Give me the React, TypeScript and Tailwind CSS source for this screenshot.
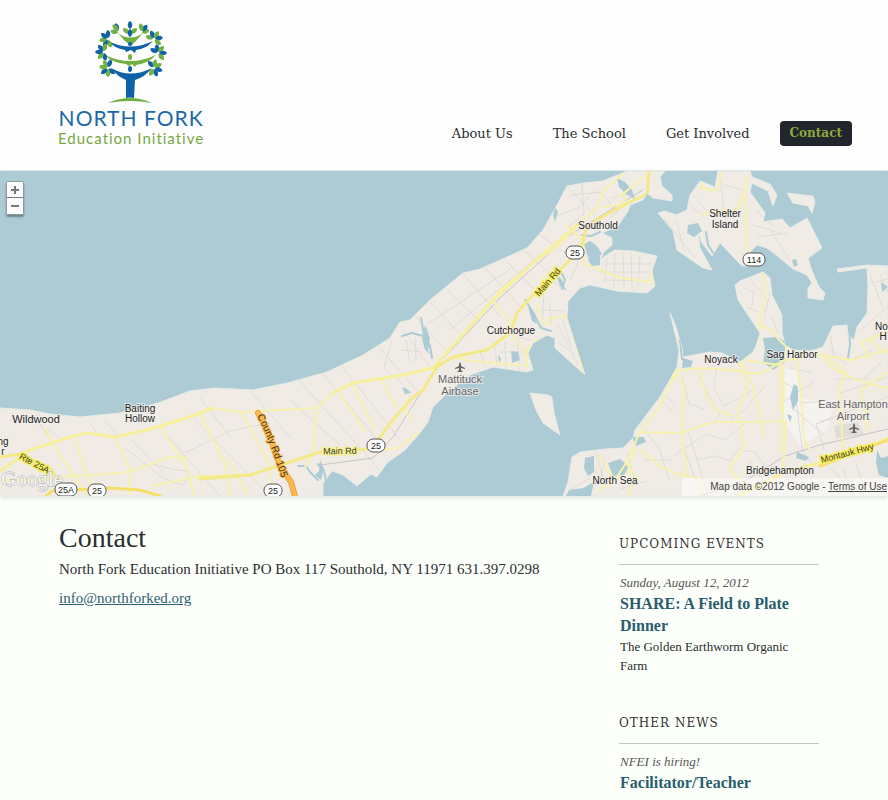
import React from 'react';

const navItems = [
  { label: 'About Us', active: false },
  { label: 'The School', active: false },
  { label: 'Get Involved', active: false },
  { label: 'Contact', active: true },
];

const blue = '#0f62a8';
const green = '#71b043';

/* Each cluster fans its leaves out around the end of a branch. */
const leafClusters = [
  { x: 109, y: 39, start: 160, colors: [green, blue, green, blue, blue] },
  { x: 155, y: 39, start: -70, colors: [green, blue, green, blue, green] },
  { x: 105, y: 52, start: 170, colors: [blue, green, blue, blue, green] },
  { x: 159, y: 53, start: -60, colors: [blue, blue, green, blue, green] },
  { x: 109, y: 68, start: 130, colors: [blue, green, blue, green, green, blue] },
  { x: 155, y: 68, start: -40, colors: [blue, green, green, blue, blue, green] },
];

const leafPath = 'M0 -1 C-3 -3 -3 -7 0 -9 C3 -7 3 -3 0 -1Z';

function TreeLogo() {
  return (
    <svg viewBox="94 18 76 88" className="h-[88px] w-[76px]" aria-hidden="true">
      <path d="M109 103 Q131 93 153 103 Q131 99 109 103Z" fill={green} />
      <path
        d="M112 68 Q131 79 153 68 Q146 77 136 80 L135 98 Q131 97 127 98 L127 80 Q119 77 112 68Z"
        fill={blue}
      />
      <path
        d="M106 55 Q131 67 157 55 Q150 63 137 65 L136 67 L133 64 L130 66 L127 64 Q113 63 106 55Z"
        fill={green}
      />
      <path
        d="M109 41 Q131 52 154 41 Q147 49 137 50 L136 53 L132 50 L127 52 L126 50 Q115 48 109 41Z"
        fill={blue}
      />
      <path d="M119 33 Q131 42 144 33 Q138 40 132 46 Q124 40 119 33Z" fill={green} />
      <ellipse cx="131" cy="69" rx="2" ry="3" fill={blue} />
      <ellipse cx="131" cy="57" rx="2" ry="3" fill={green} />
      <ellipse cx="131" cy="44" rx="2" ry="2" fill={blue} />
      {leafClusters.map((c) =>
        c.colors.map((color, i) => (
          <path
            key={`${c.x}-${c.y}-${i}`}
            d={leafPath}
            fill={color}
            transform={`translate(${c.x} ${c.y}) rotate(${c.start + i * 50})`}
          />
        )),
      )}
      <path d={leafPath} fill={blue} transform="translate(131 30)" />
      <path d={leafPath} fill={green} transform="translate(131 34) rotate(-52)" />
      <path d={leafPath} fill={green} transform="translate(131 34) rotate(52)" />
      <path d={leafPath} fill={blue} transform="translate(131 38)" />
      <path d={leafPath} fill={green} transform="translate(120 33) rotate(-75)" />
      <path d={leafPath} fill={blue} transform="translate(119 32) rotate(-15)" />
      <path d={leafPath} fill={green} transform="translate(120 31) rotate(-45)" />
      <path d={leafPath} fill={green} transform="translate(142 33) rotate(70)" />
      <path d={leafPath} fill={blue} transform="translate(143 32) rotate(35)" />
      <path d={leafPath} fill={green} transform="translate(143 32) rotate(-10)" />
    </svg>
  );
}

const land = [
  // North Fork
  'M0 408 L30 410 L50 414 L80 417 L120 413 L158 403 L190 391 L215 388 L253 390 L287 383 L327 372 L363 355 L390 338 L400 322 L410 320 L430 300 L463 273 L480 269 L507 257 L527 248 L543 230 L557 205 L567 186 L583 183 L603 181 L627 171 L665 171 L660 177 L662 186 L672 195 L672 201 L653 198 L647 193 L643 200 L630 205 L628 211 L618 226 L602 233 L612 238 L612 245 L604 252 L600 260 L608 254 L615 250 L633 251 L657 256 L652 271 L655 286 L647 293 L617 291 L590 285 L580 288 L568 301 L567 318 L585 375 L555 348 L555 338 L547 335 L533 343 L528 353 L533 370 L527 372 L493 367 L470 375 L450 390 L433 407 L428 422 L420 433 L405 450 L387 463 L377 477 L371 474 L357 486 L343 475 L332 471 L323 483 L323 496 L0 496Z',
  // Shelter Island
  'M658 213 L665 211 L676 215 L687 210 L690 195 L700 181 L715 187 L718 171 L750 171 L752 177 L770 184 L777 195 L773 206 L768 191 L752 183 L750 192 L765 213 L763 222 L782 219 L790 228 L807 218 L822 248 L808 258 L812 271 L819 287 L825 293 L823 300 L808 298 L808 288 L812 283 L807 275 L793 269 L780 258 L767 248 L757 245 L750 252 L754 266 L742 266 L720 243 L712 256 L702 243 L698 232 L700 248 L712 270 L703 268 L677 250 L673 231Z',
  'M787 193 L802 195 L813 196 L815 202 L812 213 L808 206 L793 203Z',
  // Robins Island
  'M530 393 L548 395 L552 397 L554 413 L560 435 L543 423 L536 410Z',
  // South Fork
  'M735 285 L740 281 L763 272 L770 278 L772 295 L782 315 L782 332 L785 345 L793 350 L810 351 L823 347 L833 326 L847 325 L848 335 L854 340 L857 327 L867 313 L868 285 L867 268 L838 272 L837 269 L867 265 L888 266 L888 496 L563 496 L568 482 L572 457 L580 452 L605 449 L623 448 L633 438 L635 430 L660 397 L677 367 L679 350 L670 313 L675 324 L682 347 L683 357 L710 352 L722 353 L740 362 L753 352 L757 343 L760 333 L738 300Z',
];

const ponds = [
  'M688 225 L698 223 L702 231 L694 237 L687 233Z',
  'M584 244 l6 -3 7 5 5 8 -6 5 -8 -2z',
  'M556 274 l4 12 6 5 -4 -11z',
  'M591 250 l9 5 0 10 -8 1 -4 -6z',
  'M555 207 l3 5 -3 10 -2 -7z',
  'M617 178 l8 4 7 8 3 9 -9 -5 -7 -7z',
  'M511 351 l7 1 2 8 -8 3z',
  'M498 354 l3 5 -2 4z',
  'M528 306 l4 3 5 15 -5 -3z',
  'M402 387 l5 2 4 4 -6 1z',
  'M425 325 l5 13 -2 13 6 6 -9 -7 -3 -12z',
  'M585 458 l9 -2 0 16 -6 4 -4 -8z',
  'M608 463 l12 -4 9 7 -5 9 -11 1z',
  'M632 437 l12 0 2 5 -10 4z',
  'M763 338 l14 -1 8 5 0 20 -12 8 -10 -8 2 -12z',
  'M794 384 l4 3 0 14 -5 9 -3 -13z',
  'M787 414 l5 2 -2 6z',
  'M797 452 l12 5 -3 4 -10 -3z',
  'M877 450 l4 8 7 -2 0 22 -9 -3 -3 -12z',
  'M792 260 l4 -1 2 6 -4 2z',
  'M881 282 l7 5 -6 5z',
  'M320 460 l4 9 -3 11 -6 -5 4 -4z',
  'M683 358 l10 3 -2 6 -9 1z',
  'M569 490 l15 -2 10 -6 -3 14 -25 0z',
];

const creeks = [
  'M421 318 L424 335 L430 346 L432 358',
  'M706 232 L708 245 L714 254',
  'M318 480 L310 472 L306 466 L298 466',
  'M326 481 L324 471 L318 464',
  'M525 300 L533 312 L541 328 L551 331',
  'M560 270 L565 280 L562 289',
  'M849 325 L850 345 L848 358',
  'M600 232 L591 236 L582 235',
  'M680 340 L682 359 L688 363',
  'M574 496 L590 485 L599 482',
  'M402 336 L412 333 L423 336',
];

const streets = [
  'M35 417 L53 444 M90 423 L100 437 M105 420 L120 438 M125 448 L163 478 L183 485 L190 472 L178 470 L150 464',
  'M130 438 L164 473 M165 433 L220 496 M180 455 L230 431 L270 423 M195 420 L270 496 M200 398 L230 436 M250 391 L290 437 M297 378 L380 470',
  'M323 374 L378 440 M290 400 L340 445 M340 364 L400 440 M378 346 L421 395 M392 340 L384 368 L402 384 M403 330 L432 370',
  'M415 316 L447 352 M430 302 L460 334 M446 288 L478 320 M463 274 L500 316 M485 268 L520 306 M505 260 L533 288 M524 250 L550 274',
  'M428 324 L510 269 M450 330 L540 255 M402 350 L422 352 M406 340 L410 362 M415 338 L416 360 M540 235 L568 255',
  'M480 352 L486 367 M495 347 L497 366 M505 341 L506 368 M517 340 L520 370 M524 352 L500 352 M530 340 L518 337',
  'M567 187 L595 215 M582 184 L584 214 L569 226 M595 190 L580 207 L555 217 M604 196 L617 212 M570 195 L603 192 M611 198 L628 194 M586 230 L605 222 L619 210',
  'M607 258 L605 282 M615 254 L614 287 M623 253 L624 288 M631 253 L632 289 M640 256 L638 289 M602 264 L652 264 M600 272 L651 272 M602 280 L650 281',
  'M540 310 L565 311 M544 292 L542 327 M550 303 L551 325 M557 323 L578 365 M563 319 L571 347 M558 342 L575 355 M584 250 L570 280 M550 281 L566 289',
  'M665 220 L695 258 M676 219 L684 250 M690 205 L704 216 M693 195 L717 222 M724 185 L742 190 M720 176 L724 210 M726 214 L739 209 M757 211 L773 226 M753 225 L781 233 M758 237 L788 233 M770 230 L790 260',
  'M743 288 L754 292 L752 306 M750 279 L767 300 M747 307 L759 312 M770 293 L764 318 M772 317 L778 333 M682 375 L689 404 L704 409 M665 395 L675 404 L671 411 L662 400Z',
  'M698 375 L716 410 M716 370 L714 388 L724 406 L755 389 M742 375 L753 385 M765 386 L743 411 L730 419 M675 455 L706 434 L725 440 L744 424 M683 445 L696 481 M696 460 L715 456 L730 461 L739 448 M740 450 L755 452 L770 473',
  'M641 425 L660 450 L669 480 M645 460 L672 460 M688 430 L708 496 M720 413 L715 422 M748 460 L770 490 M783 382 L797 390 M785 401 L803 389 L815 381 M800 403 L827 401 M790 368 L812 373 M836 379 L870 379 M840 393 L888 377 M846 365 L831 349',
  'M820 422 L888 397 M865 377 L882 362 M861 330 L888 306 M868 343 L888 322 M872 350 L855 358 M830 335 L834 357 M870 275 L883 308 M880 274 L888 292 M870 283 L888 279',
  'M585 457 L603 481 M596 452 L603 477 M590 478 L570 490 M605 460 L600 481 M627 454 L636 484 M620 489 L646 481 M30 418 L58 436 M10 420 L40 415',
  'M795 390 L802 449 L815 469 M790 406 L824 435 M824 449 L816 424 L833 418 M828 466 L845 483 M843 468 L850 492 M856 463 L864 487',
];

const roads = [
  'M0 471 L30 450 L67 438 L87 433 L115 437 L147 430 L187 418 L213 408 L240 412 L317 408 L333 393 L353 383 L403 375 L433 368 L467 330 L493 300 L500 290 L533 263 L557 247 L580 223 L597 208 L603 191 L623 173',
  'M45 428 L53 445 L88 496 M74 437 L93 493 M115 437 L130 470 L129 494 M160 426 L187 468 L194 496 M200 413 L225 464 L231 496 M241 412 L268 461 L274 496',
  'M0 480 L38 480 L60 477 L121 473 L138 469 L170 457 L188 458 M154 486 L203 475 M228 459 L248 494 M317 410 L313 440 L314 452 M340 394 L365 432 M352 384 L374 428 M380 378 L397 407',
  'M373 451 L397 448 L419 433 M404 408 L413 421 M315 451 L305 467',
  'M455 357 L470 361 L527 366 L527 353 L511 333 M525 353 L538 338 M530 300 L541 286 L544 277',
  'M495 303 L509 321 L511 333 M537 305 L543 323 L549 323 L548 319 L565 316 L569 320 L584 373 M583 242 L584 264 L602 270 L616 277 L652 282 L652 271 M567 225 L585 243 M553 280 L560 274',
  'M603 207 L619 205 L627 198 M619 197 L644 177',
  'M703 183 L700 188 L711 190 L718 190 M721 171 L719 186 M746 175 L745 190 L736 210 L710 211 L702 216 M744 188 L748 257',
  'M763 273 L765 285 L764 304 L759 324 L772 331 L779 340 L790 350 M759 324 L758 340 L750 354 L740 360 L751 380 L759 411 L764 437',
  'M672 379 L674 371 L699 368 L730 370 L759 374 L785 360 L820 355 L851 360 L888 350 M699 368 L706 395 L716 410 L733 416 M674 371 L684 385 L682 434 L687 477',
  'M677 370 L659 408 L640 432 L626 463 L615 480 L599 490 M640 432 L680 433 L713 422 L756 422 L786 421 L783 469 M745 360 L780 365 L781 410',
  'M738 362 L747 387 L738 411 L744 447 L729 469 L745 485 L768 491 M781 362 L784 386 L781 451 M795 356 L801 389 L804 439 L809 449',
  'M826 356 L846 373 L839 389 L841 418 L844 458 M820 353 L832 368 L855 379 L888 389 M868 360 L862 342 L888 331 M885 353 L870 340 M888 372 L861 390 L868 430',
  'M640 450 L660 466 L675 473 L699 479 L701 495 M635 450 L628 471 L631 495 M600 455 L614 482 M625 462 L640 481',
];

type Place = { lines: string[]; x: number; y: number; lh?: number; size?: number; color?: string };

const places: Place[] = [
  { lines: ['Wildwood'], x: 36, y: 423, size: 11 },
  { lines: ['Baiting', 'Hollow'], x: 140, y: 412 },
  { lines: ['Southold'], x: 598, y: 229 },
  { lines: ['Shelter', 'Island'], x: 725, y: 217, lh: 11 },
  { lines: ['Cutchogue'], x: 511, y: 334 },
  { lines: ['Mattituck', 'Airbase'], x: 460, y: 383, lh: 12, size: 11, color: '#666666' },
  { lines: ['Noyack'], x: 721, y: 363 },
  { lines: ['Sag Harbor'], x: 792, y: 358 },
  { lines: ['East Hampton', 'Airport'], x: 853, y: 408, lh: 12, size: 11, color: '#666666' },
  { lines: ['Bridgehampton'], x: 780, y: 474 },
  { lines: ['North Sea'], x: 615, y: 484 },
  { lines: ['Nor', 'H'], x: 883, y: 330, lh: 10 },
  { lines: ['ng', 'r'], x: 3, y: 445 },
];

const shields = [
  { label: '25', x: 575, y: 252 },
  { label: '25', x: 376, y: 445 },
  { label: '25', x: 273, y: 490 },
  { label: '25', x: 97, y: 490 },
  { label: '25A', x: 66, y: 489 },
  { label: '114', x: 754, y: 259 },
];

const roadNames = [
  { label: 'Main Rd', x: 550, y: 284, angle: -49, halo: '#f4ec62' },
  { label: 'Main Rd', x: 340, y: 454, angle: -1, halo: '#f5f09a' },
  { label: 'Rte 25A', x: 33, y: 466, angle: 28, halo: '#f4ec62' },
  { label: 'Montauk Hwy', x: 848, y: 456, angle: -15, halo: '#f4ec62' },
];

function Plane({ x, y }: { x: number; y: number }) {
  return (
    <path
      transform={`translate(${x} ${y})`}
      d="M0 -5 L1 -3 L1 -1 L5 1 L5 2 L1 1 L1 3 L3 5 L-3 5 L-1 3 L-1 1 L-5 2 L-5 1 L-1 -1 L-1 -3Z"
      fill="#666666"
    />
  );
}

function AreaMap() {
  return (
    <svg
      viewBox="0 171 888 325"
      preserveAspectRatio="xMidYMid slice"
      className="block h-full w-full font-['Liberation_Sans',Arial,sans-serif]"
      role="img"
      aria-label="Map of the North Fork of Long Island"
    >
      <defs>
        <clipPath id="shore">
          {land.map((d) => (
            <path key={d} d={d} />
          ))}
        </clipPath>
      </defs>
      <rect y="171" width="888" height="325" fill="#accbd5" />
      <g fill="#f0ece5" stroke="#e6ebe5" strokeLinejoin="round">
        {land.map((d) => (
          <path key={d} d={d} />
        ))}
      </g>
      <path d="M785 369 L797 368 L800 398 L832 402 L828 430 L800 446 L784 420Z" fill="#f5f3f0" />
      <path d="M834 426 L858 422 L864 435 L836 438Z" fill="#e0dcd7" />
      <g clipPath="url(#shore)" fill="none" strokeLinejoin="round" strokeLinecap="round">
        <g stroke="#dfdbd7">
          {streets.map((d) => (
            <path key={d} d={d} />
          ))}
        </g>
        <g fill="#accbd5">
          {ponds.map((d) => (
            <path key={d} d={d} />
          ))}
        </g>
        <g stroke="#accbd5" strokeWidth="2">
          {creeks.map((d) => (
            <path key={d} d={d} />
          ))}
        </g>
        <path
          d="M320 465 L373 458 L393 437 L440 362 L500 298 L567 237 L620 204 L643 190 M700 496 L745 481 L785 456 L820 445 L888 429"
          stroke="#c9c2c9"
          strokeWidth="1"
        />
        <g stroke="#f6f1ae" strokeWidth="2">
          {roads.map((d) => (
            <path key={d} d={d} />
          ))}
        </g>
        <path
          d="M0 471 L30 450 L67 438 L87 433 L115 437 L147 430 L187 418 L213 408 M333 393 L353 383 L403 375 L433 368 L467 330 L493 300 L533 263 L580 223 M738 496 L790 470 L820 463 L868 447 L888 438 M200 477 L250 475"
          stroke="#f6f09c"
          strokeWidth="3"
        />
        <path
          d="M200 479 L250 475 L290 462 L320 452 L370 449 L380 437 L393 420 L410 400 L423 390 L437 367 L453 357 L487 350 L510 333 L517 313 L528 300 L560 270 L570 260 L583 243 L586 228 L600 218 L628 203 L647 194 L649 171 M0 457 L20 454 L50 468 L58 480"
          stroke="#f4e987"
          strokeWidth="3"
        />
        <path
          d="M44 498 L52 491 L110 488 L140 490 L160 496 M820 466 L888 440"
          stroke="#f5df6c"
          strokeWidth="3"
        />
        <path d="M258 413 L268 432 L280 466 L291 482 L295 496" stroke="#e9a242" strokeWidth="6" />
        <path d="M258 413 L268 432 L280 466 L291 482 L295 496" stroke="#fbb94d" strokeWidth="4" />
      </g>
      <path id="county-road" d="M257 416 C267 434 272 450 281 476" fill="none" />
      <text
        fontSize="10"
        fill="#3c2c10"
        stroke="#fbb94d"
        strokeWidth="2"
        paintOrder="stroke"
      >
        <textPath href="#county-road">County Rd 105</textPath>
      </text>
      {roadNames.map((r) => (
        <text
          key={`${r.label}-${r.x}`}
          transform={`translate(${r.x} ${r.y}) rotate(${r.angle})`}
          textAnchor="middle"
          fontSize="9"
          fill="#44401a"
          stroke={r.halo}
          strokeWidth="3"
          paintOrder="stroke"
        >
          {r.label}
        </text>
      ))}
      <text
        x="1"
        y="486"
        fontSize="21"
        fill="#f6f6f4"
        stroke="#a9aaaa"
        strokeWidth="1"
        paintOrder="stroke"
        className="font-['Liberation_Serif',serif]"
      >
        Google
      </text>
      {shields.map((s) => {
        const half = s.label.length > 2 ? 11 : 9;
        return (
          <g key={`${s.x}-${s.y}`}>
            <rect
              x={s.x - half}
              y={s.y - 6}
              width={half * 2}
              height="13"
              rx="6"
              fill="#ffffff"
              stroke="#555555"
            />
            <text x={s.x} y={s.y + 4} textAnchor="middle" fontSize="9" fill="#222222">
              {s.label}
            </text>
          </g>
        );
      })}
      <Plane x={460} y={367} />
      <Plane x={854} y={428} />
      {places.map((p) =>
        p.lines.map((line, i) => (
          <text
            key={`${line}-${p.x}`}
            x={p.x}
            y={p.y + i * (p.lh ?? 10)}
            textAnchor="middle"
            fontSize={p.size ?? 10}
            fill={p.color ?? '#222222'}
            stroke="#f5f2ee"
            strokeWidth="2"
            strokeOpacity="0.700"
            paintOrder="stroke"
          >
            {line}
          </text>
        )),
      )}
    </svg>
  );
}

function ZoomButton({ label, symbol }: { label: string; symbol: string }) {
  return (
    <button
      type="button"
      aria-label={label}
      className="flex h-4 w-4 items-center justify-center bg-white text-[#777]"
    >
      <svg viewBox="0 0 8 8" className="h-2 w-2" aria-hidden="true">
        <path d={symbol} stroke="currentColor" strokeWidth="2" />
      </svg>
    </button>
  );
}

function SideSection({ title, children }: { title: string; children: React.ReactNode }) {
  return (
    <section>
      <h2 className="border-b border-[#c3c6c1] pb-3 font-['DejaVu_Serif',serif] text-[12px] leading-4 tracking-[1px] text-[#333] uppercase">
        {title}
      </h2>
      <div className="pt-2 pl-px">{children}</div>
    </section>
  );
}

export default function App() {
  return (
    <div className="min-h-screen bg-[#fdfffb] font-['Liberation_Serif',Georgia,serif] text-[#2a2e30]">
      <header className="flex items-end justify-between border-b border-[#e4ebeb] bg-[#fefefe] pt-[18px] pr-9 pb-6 pl-[58px]">
        <a href="#home" className="flex flex-col items-center font-['Lato',sans-serif]">
          <TreeLogo />
          <span className="text-[21px] leading-6 tracking-[1px] whitespace-nowrap text-[#1a68a8]">
            NORTH FORK
          </span>
          <span className="text-[15px] leading-4 tracking-[1px] whitespace-nowrap text-[#76a83e]">
            Education Initiative
          </span>
        </a>
        <nav className="flex gap-5 font-['DejaVu_Serif',serif] text-[13px] leading-[25px]">
          {navItems.map((item) => (
            <a
              key={item.label}
              href={'#' + item.label.toLowerCase().replace(' ', '-')}
              className={
                item.active
                  ? 'rounded bg-[#20262c] px-[10px] text-[12px] font-bold whitespace-nowrap text-[#8fa83f]'
                  : 'px-[10px] whitespace-nowrap'
              }
            >
              {item.label}
            </a>
          ))}
        </nav>
      </header>

      <div className="relative h-[325px] overflow-hidden shadow-[0_2px_5px_rgba(0,0,0,0.12)]">
        <AreaMap />
        <div className="absolute top-[10px] left-[6px] flex flex-col divide-y divide-[#777] rounded-xs border border-[#8a9a9f] shadow-[0_2px_2px_rgba(0,0,0,0.35)]">
          <ZoomButton label="Zoom in" symbol="M0 4H8M4 0V8" />
          <ZoomButton label="Zoom out" symbol="M0 4H8" />
        </div>
        <p className="absolute right-0 bottom-0 bg-white/50 py-px pr-px pl-7 font-['Liberation_Sans',Arial,sans-serif] text-[10px] leading-4 text-[#444]">
          Map data ©2012 Google -{' '}
          <a href="#terms" className="underline">
            Terms of Use
          </a>
        </p>
      </div>

      <div className="flex justify-between pt-6 pr-[69px] pl-[59px]">
        <main>
          <h1 className="text-[28px] leading-9">Contact</h1>
          <p className="mt-1 text-[15px] leading-[18px]">
            North Fork Education Initiative PO Box 117 Southold, NY 11971 631.397.0298
          </p>
          <p className="mt-[11px] text-[15px] leading-[18px]">
            <a href="mailto:info@northforked.org" className="text-[#2b6070] underline">
              info@northforked.org
            </a>
          </p>
        </main>
        <aside className="flex w-[200px] shrink-0 flex-col gap-10 pt-4">
          <SideSection title="Upcoming Events">
            <p className="text-[13px] leading-5 text-[#555] italic">Sunday, August 12, 2012</p>
            <h3 className="text-[16px] leading-[22px] font-bold text-[#295e6c]">
              <a href="#share">SHARE: A Field to Plate Dinner</a>
            </h3>
            <p className="text-[13px] leading-[19px]">The Golden Earthworm Organic Farm</p>
          </SideSection>
          <SideSection title="Other News">
            <p className="text-[13px] leading-5 text-[#555] italic">NFEI is hiring!</p>
            <h3 className="text-[16px] leading-[22px] font-bold text-[#295e6c]">
              <a href="#hiring">Facilitator/Teacher</a>
            </h3>
          </SideSection>
        </aside>
      </div>
    </div>
  );
}
